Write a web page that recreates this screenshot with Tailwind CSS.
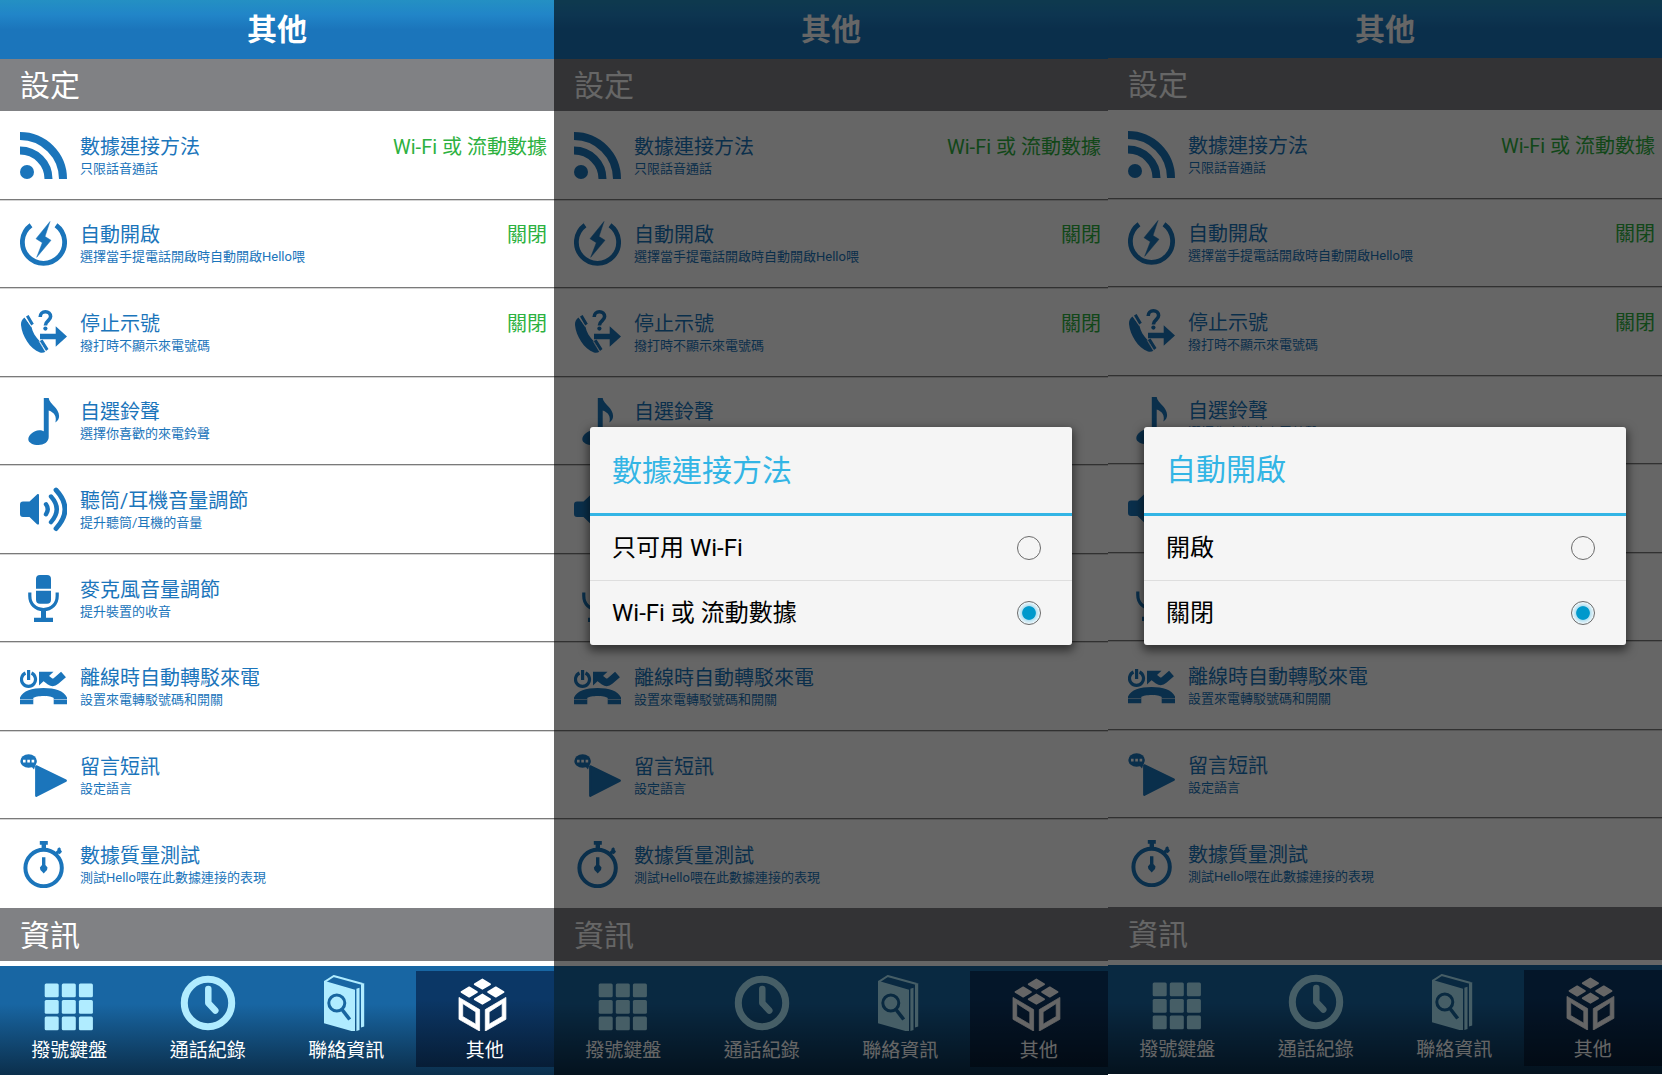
<!DOCTYPE html>
<html lang="zh-Hant">
  <head>
    <meta charset="UTF-8" />
    <meta name="viewport" content="width=device-width, initial-scale=1.0">
    <title>其他</title>
    <script src="https://cdn.jsdelivr.net/npm/@tailwindcss/browser@4"></script>
  </head>
  <body class="bg-white font-[Roboto,'Noto_Sans_CJK_TC',sans-serif]">

    <!-- icons -->
    <svg class="hidden">
      <symbol id="i-feed" viewBox="0 0 47 47">
        <circle cx="7" cy="40" r="7" fill="currentColor" />
        <path fill="none" stroke="currentColor" stroke-width="8" d="M0 4A43 43 0 0 1 43 47M0 18.500A28.500 28.500 0 0 1 28.500 47" />
      </symbol>
      <symbol id="i-bolt" viewBox="0 0 47 47">
        <path fill="none" stroke="currentColor" stroke-width="4.8" d="M11 4.2A21.1 21.1 0 1 0 36 4.2" />
        <path fill="currentColor" stroke="currentColor" stroke-width=".5" d="M30 .5L16 17.7l6.3 4-5.6 14.6L31 19.3l-6-3.8z" />
      </symbol>
      <symbol id="i-hide" viewBox="0 0 47 47">
        <path fill="currentColor" d="M4.500 8.500C2 10 .8 13 1 16c1 11 9 24 19 27.500 2 .5 4 .2 5.500-.8L19.500 32C15.500 28 12.500 23 11.500 18z" />
        <path fill="currentColor" d="M6 7.600L8.600 6l5.200 8.700-2.600 1.700zM19.800 32l2.700-1.500L28.500 40 26 42z" />
        <path fill="none" stroke="#fff" stroke-width=".7" d="M5 8l6.300 9.800M19.200 32.300L25.700 43" />
        <path fill="none" stroke="currentColor" stroke-width="3.600" d="M20.200 8c0-3.200 2.200-5.200 5.200-5.200s5.200 2 5.200 4.800c0 4-5.200 4-5.200 9" />
        <circle cx="25.400" cy="19.600" r="2.100" fill="currentColor" />
        <path fill="currentColor" d="M20 24.800h15.700v-7.500L47 27.500 35.700 37.700v-7.400H20z" />
      </symbol>
      <symbol id="i-note" viewBox="0 0 47 47">
        <path fill="currentColor" d="M23.800 0h4.900c.7 6 10.400 10 10.400 18 0 2.500-1 4.700-3.700 6.500 1.500-6-1-10-6.700-12V39c0 5-5 8-10.300 8S8.300 44.700 8.300 41.200s5-8.900 11-8.900c2 0 3.500.5 4.500 1z" />
      </symbol>
      <symbol id="i-sound" viewBox="0 0 47 47">
        <path fill="currentColor" d="M3 15.500h6.500L17 8.400c1-.8 2-.4 2 .8v28.200c0 1.200-1 1.600-2 .8L9.500 31H3c-2 0-3-1-3-3v-9.500c0-2 1-3 3-3z" />
        <path fill="none" stroke="currentColor" stroke-width="4.400" stroke-linecap="round" d="M26 18.300q3.500 5 0 10M31 10.500q11.500 12.800 0 25.600" />
        <path fill="none" stroke="currentColor" stroke-width="4.800" stroke-linecap="round" d="M36 4q18 19.300 0 38.600" />
      </symbol>
      <symbol id="i-mic" viewBox="0 0 47 47">
        <path fill="currentColor" d="M16 13.700V4q0-4 4-4h7q4 0 4 4v9.700zM16 15.700h15v9q0 4-4 4h-7q-4 0-4-4zM21 34h5v8.800h7V47H14v-4.200h7z" />
        <path fill="none" stroke="currentColor" stroke-width="3.200" d="M9.800 17.500v3.500c0 8 5.700 13.500 13.700 13.500S37.200 29 37.200 21v-3.500" />
      </symbol>
      <symbol id="i-forward" viewBox="0 0 47 47">
        <path fill="none" stroke="currentColor" stroke-width="3.200" d="M5.500 9a7 7 0 1 0 6 0M8.600 6v10" />
        <path fill="currentColor" d="M19 7.800h14.500L19 21.500z" />
        <path fill="none" stroke="currentColor" stroke-width="7.400" d="M23 12l7 5.500q3 2 6-.5l7.500-6.500" />
        <path fill="currentColor" d="M0 33.500c3-6.800 12-9.500 23.500-9.500s20.500 2.700 23.500 9.500V40.300H33.700v-6.300c-3-2.800-17.400-2.800-20.400 0v6.300H0z" />
        <path stroke="#fff" stroke-width=".5" d="M0 35.500h13.300M33.700 35.500H47" />
      </symbol>
      <symbol id="i-message" viewBox="0 0 47 47">
        <ellipse cx="8.600" cy="9" rx="8.300" ry="6.800" fill="currentColor" />
        <path fill="currentColor" d="M10 13l6-1.500-2 6z" />
        <path fill="currentColor" stroke="currentColor" stroke-width="2.400" stroke-linejoin="round" d="M16.300 14.400L45.700 28.700 16.300 43.700z" />
        <path fill="#fff" d="M3 7.800h2.600v2.600H3zM7.300 7.800h2.600v2.600H7.300zM11.600 7.800h2.600v2.600h-2.600z" />
      </symbol>
      <symbol id="i-timer" viewBox="0 0 47 47">
        <circle cx="23.600" cy="27" r="18.200" fill="none" stroke="currentColor" stroke-width="4" />
        <path fill="currentColor" d="M19.800 0h8v3.800H26V9h-4.400V3.800h-1.800zM35 11.600l2.600-2.700-.4-.8 2-1.800 1.500 1.200 0 1.200 1.300 2-2.300 2.500-1-.6-1.800 2zM22 16.300h3.400V24l2.100 2.500q0 3-2 4l-1.800 2-1.800-2q-2-1-2-4l2.100-2.500z" />
      </symbol>
      <symbol id="n-keypad" viewBox="0 0 56 56">
        <g fill="currentColor">
          <rect x="3.700" y="8.500" width="14" height="13.700" rx="1.500" /><rect x="20.800" y="8.500" width="14" height="13.700" rx="1.500" /><rect x="37.900" y="8.500" width="14" height="13.700" rx="1.500" />
          <rect x="3.700" y="25" width="14" height="13.700" rx="1.500" /><rect x="20.800" y="25" width="14" height="13.700" rx="1.500" /><rect x="37.900" y="25" width="14" height="13.700" rx="1.500" />
          <rect x="3.700" y="41.500" width="14" height="13.700" rx="1.500" /><rect x="20.800" y="41.500" width="14" height="13.700" rx="1.500" /><rect x="37.900" y="41.500" width="14" height="13.700" rx="1.500" />
        </g>
      </symbol>
      <symbol id="n-clock" viewBox="0 0 56 56">
        <circle cx="28" cy="28" r="23.700" fill="none" stroke="currentColor" stroke-width="7" />
        <path fill="none" stroke="currentColor" stroke-width="6.500" stroke-linecap="round" stroke-linejoin="round" d="M28.300 14v14l7 7.500" />
      </symbol>
      <symbol id="n-book" viewBox="0 0 56 56">
        <path fill="none" stroke="currentColor" stroke-width="2" stroke-linejoin="round" d="M6.700 6.800L15.700 1l29 8" />
        <path fill="currentColor" d="M6 5.700l31 9v42.300L6 48.300zM38.400 13.700l3.100-1V55l-3.100 1zM43 9.500l3.200-1.500v43.500l-3.200 1z" />
        <g fill="none" stroke="#1866a0" stroke-width="3"><circle cx="18.800" cy="28" r="8" /><path stroke-width="3.600" d="M24 34.500l7.700 10" /></g>
      </symbol>
      <symbol id="n-cube" viewBox="0 0 56 56">
        <path fill="currentColor" stroke="currentColor" stroke-width="1.600" stroke-linejoin="round" d="M25.400 4.400l7.800 4.800-7.800 4.700-7.800-4.700zM12.200 12.200l7.800 4.800-7.800 4.700-7.800-4.700zM38.800 12.200l7.800 4.800-7.800 4.700-7.800-4.700zM25.400 19.400l7.800 4.800-7.800 4.700-7.800-4.700z" />
        <path fill="currentColor" fill-rule="evenodd" stroke="currentColor" stroke-width=".8" stroke-linejoin="round" d="M2 22.400l20.600 12.200V56L2 44.300zM5.700 28.500v13L18.800 49.200V36.900zM48.900 22.400L28.300 34.600V56l20.600-11.700zM45.200 28.500v13l-13.100 7.700V36.900z" />
      </symbol>
    </svg>

    <main id="screens" class="grid grid-cols-3 min-h-screen"></main>

    <script>
      const settings = [
        { icon: 'i-feed', title: '數據連接方法', note: '只限話音通話', value: 'Wi-Fi 或 流動數據' },
        { icon: 'i-bolt', title: '自動開啟', note: '選擇當手提電話開啟時自動開啟Hello喂', value: '關閉' },
        { icon: 'i-hide', title: '停止示號', note: '撥打時不顯示來電號碼', value: '關閉' },
        { icon: 'i-note', title: '自選鈴聲', note: '選擇你喜歡的來電鈴聲', value: '' },
        { icon: 'i-sound', title: '聽筒/耳機音量調節', note: '提升聽筒/耳機的音量', value: '' },
        { icon: 'i-mic', title: '麥克風音量調節', note: '提升裝置的收音', value: '' },
        { icon: 'i-forward', title: '離線時自動轉駁來電', note: '設置來電轉駁號碼和開關', value: '' },
        { icon: 'i-message', title: '留言短訊', note: '設定語言', value: '' },
        { icon: 'i-timer', title: '數據質量測試', note: '測試Hello喂在此數據連接的表現', value: '' },
      ];

      const tabs = [
        { icon: 'n-keypad', label: '撥號鍵盤' },
        { icon: 'n-clock', label: '通話紀錄' },
        { icon: 'n-book', label: '聯絡資訊' },
        { icon: 'n-cube', label: '其他', active: true },
      ];

      const screens = [
        { frame: '', bar: 'h-[59px]' },
        { frame: '', bar: 'h-[59px]', dialog: { name: 'data', title: '數據連接方法', options: ['只可用 Wi-Fi', 'Wi-Fi 或 流動數據'], selected: 1 } },
        { frame: 'mb-px', bar: 'h-[58px]', dialog: { name: 'autostart', title: '自動開啟', options: ['開啟', '關閉'], selected: 1 } },
      ];

      const settingRow = (s) => `
        <li class="not-last:border-b border-[#7a7a7a] not-last:shadow-[0_1px_#d4d4d4]">
          <button type="button" class="w-full h-full flex items-center gap-[13px] pt-[2px] pl-5 pr-[7px] text-left text-[#1b75bb]">
            <svg class="size-[47px] shrink-0"><use href="#${s.icon}" /></svg>
            <span class="flex-1 pt-[2px]">
              <span class="flex justify-between text-xl leading-6">
                <span>${s.title}</span>
                <span class="text-[#2db140]">${s.value}</span>
              </span>
              <span class="block text-[13px] leading-5">${s.note}</span>
            </span>
          </button>
        </li>`;

      const tabLink = (t) => `
        <a href="#" class="flex flex-col items-center pt-1 gap-[6px] ${t.active ? 'bg-linear-to-b from-[#0b3766] from-30% to-[#071d36] text-white' : 'text-[#b0ecff]'}">
          <svg class="size-14 overflow-visible"><use href="#${t.icon}" /></svg>
          <span class="text-[19px] leading-7 text-white">${t.label}</span>
        </a>`;

      const dialogBox = (d) => `
        <div class="absolute inset-0 bg-black/60 flex items-center px-9 pb-[3px]">
          <fieldset role="dialog" aria-label="${d.title}" class="w-full bg-[#f5f5f5] rounded-[3px] shadow-[0_4px_10px_2px_rgba(0,0,0,0.5)]">
            <h2 class="h-[89px] flex items-center px-[22px] border-b-3 border-[#33b5e5] text-[30px] text-[#33b5e5]">${d.title}</h2>
            ${d.options.map((o, i) => `
            <label class="h-16 box-content flex items-center justify-between pl-[22px] pr-[31px] text-2xl text-black not-last:border-b border-[#dedede]">
              ${o}
              <input type="radio" name="${d.name}" ${i === d.selected ? 'checked' : ''}
                     class="appearance-none size-6 rounded-full border border-[#6b6b6b] checked:bg-[radial-gradient(circle_closest-side,#0099cc_58%,#b5e0f0_66%,#e8f5fa_95%)]" />
            </label>`).join('')}
          </fieldset>
        </div>`;

      document.getElementById('screens').innerHTML = screens.map((s) => `
        <section class="relative flex flex-col ${s.frame}">
          <header class="${s.bar} flex items-center justify-center bg-linear-to-b from-[#2490c3] via-[#2185c8] via-25% to-[#1b75bb] to-50%">
            <h1 class="text-[30px] font-bold text-white">其他</h1>
          </header>
          <h2 class="h-13 flex items-center pl-5 bg-[#808184] text-[30px] text-white">設定</h2>
          <ul class="flex-1 grid auto-rows-fr">${settings.map(settingRow).join('')}</ul>
          <h2 class="h-[53px] mb-[5px] pt-[2px] flex items-center pl-5 bg-[#808184] text-[30px] text-white">資訊</h2>
          <nav class="h-[109px] pt-[5px] pb-2 grid grid-cols-4 bg-linear-to-b from-[#1866a3] from-35% to-[#0b2f4c]">
            ${tabs.map(tabLink).join('')}
          </nav>
          ${s.dialog ? dialogBox(s.dialog) : ''}
        </section>`).join('');
    </script>
  </body>
</html>
